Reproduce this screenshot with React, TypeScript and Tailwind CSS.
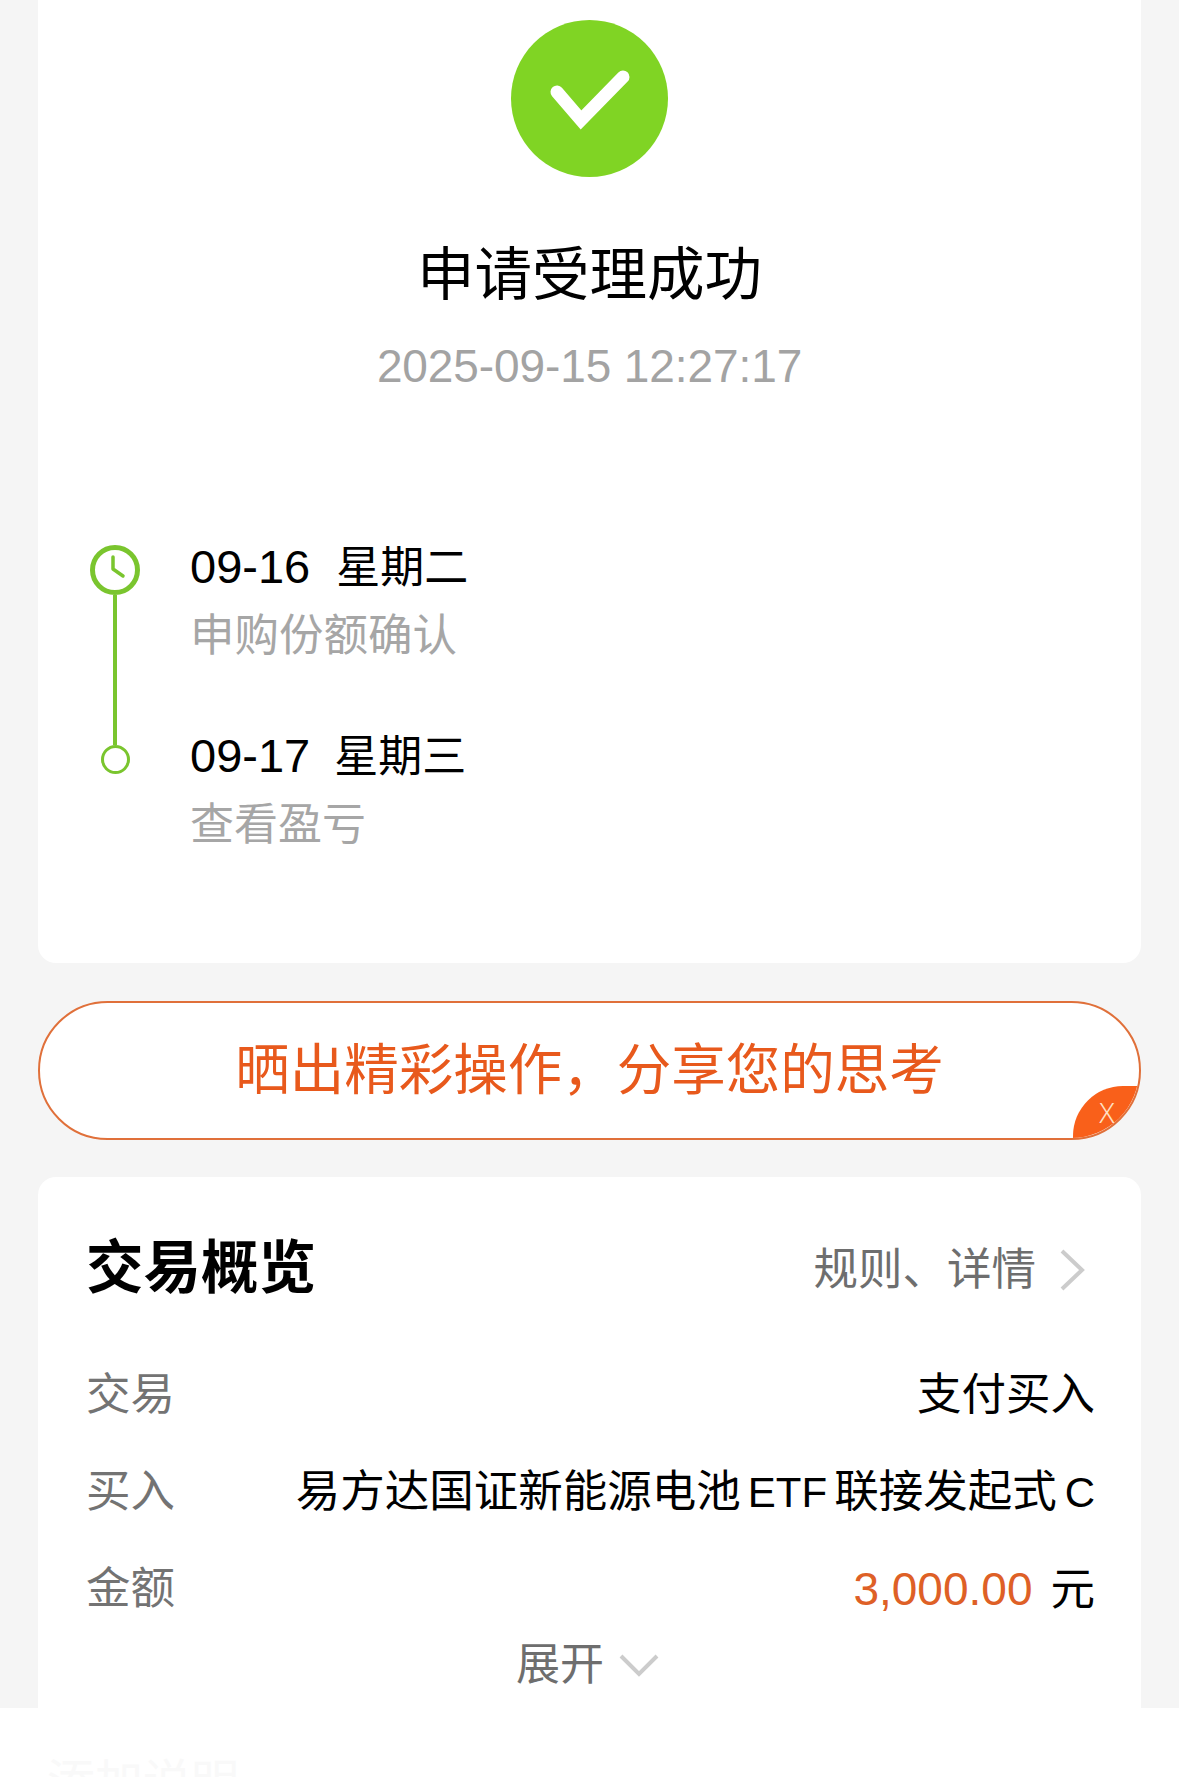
export default function App() {
  const rows = [
    { label: "交易", value: <span className="text-black">支付买入</span> },
    {
      label: "买入",
      value: (
        <span className="text-black">
          易方达国证新能源电池
          <span className="mx-[7px] text-[42px]">ETF</span>
          联接发起式
          <span className="ml-[8px] text-[42px]">C</span>
        </span>
      ),
    },
    {
      label: "金额",
      value: (
        <span className="text-black">
          <span className="text-[46px] text-[#de6026]">3,000.00</span>
          <span className="ml-[18px]">元</span>
        </span>
      ),
    },
  ];
  return (
    <div className="h-[1777px] overflow-hidden flex flex-col bg-[#f5f5f5] [font-family:'Liberation_Sans','Noto_Sans_CJK_SC',sans-serif]">
      <main className="flex-1 min-h-0 overflow-hidden px-[38px]">
        <section className="bg-white rounded-b-[18px] pt-[20px] pb-[113px]">
          <div className="flex flex-col items-center">
            <svg viewBox="0 0 157 157" className="w-[157px] h-[157px]">
              <circle cx="78.5" cy="78.5" r="78.5" fill="#80d424" />
              <path d="M46 72 L70 100 L112 57" fill="none" stroke="#fff" strokeWidth="13" strokeLinecap="round" strokeLinejoin="miter" />
            </svg>
            <h1 className="mt-[68px] text-[57.5px] leading-[60px] font-normal text-black">申请受理成功</h1>
            <p className="mt-[36px] text-[46px] leading-[50px] text-[#a3a3a3] tracking-[-0.1px]">2025-09-15 12:27:17</p>
          </div>
          <div className="mt-[151px] pl-[52px] flex gap-[50px]">
            <div className="w-[50px] pt-[3px] pb-[76px] flex flex-col items-center">
              <svg viewBox="0 0 50 50" className="w-[50px] h-[50px] shrink-0">
                <circle cx="25" cy="25" r="22.5" fill="none" stroke="#7ac52e" strokeWidth="5" />
                <path d="M23 12 V24 L33 31" fill="none" stroke="#7ac52e" strokeWidth="3.5" strokeLinecap="round" strokeLinejoin="round" />
              </svg>
              <div className="w-[4px] flex-1 bg-[#7ac52e]" />
              <div className="w-[29px] h-[29px] shrink-0 rounded-full border-[3px] border-[#7ac52e]" />
            </div>
            <div>
              <p className="text-[44px] leading-[50px] text-black">
                <span className="text-[47px]">09-16</span>
                <span className="ml-[26px]">星期二</span>
              </p>
              <p className="mt-[18px] text-[44.5px] leading-[50px] text-[#a6a6a6]">申购份额确认</p>
              <p className="mt-[70px] text-[44px] leading-[50px] text-black">
                <span className="text-[47px]">09-17</span>
                <span className="ml-[24px]">星期三</span>
              </p>
              <p className="mt-[18px] text-[44px] leading-[50px] text-[#a6a6a6]">查看盈亏</p>
            </div>
          </div>
        </section>

        <div className="relative mt-[38px] h-[139px] rounded-[70px] border-2 border-[#e0703a] bg-white overflow-hidden flex items-center justify-center">
          <span className="text-[54.5px] leading-[60px] text-[#e8591c]">晒出精彩操作，分享您的思考</span>
          <div className="absolute right-0 bottom-0 w-[66px] h-[52px] bg-[#f9601a] rounded-tl-[50px] flex items-center justify-center pl-[2px]">
            <span className="text-[28px] leading-none font-light text-[#ffe0c4] [font-family:'Noto_Sans',sans-serif]">X</span>
          </div>
        </div>

        <section className="mt-[37px] h-[600px] bg-white rounded-t-[18px] pt-[61px] pl-[48px] pr-[46px]">
          <div className="flex items-center justify-between">
            <h2 className="text-[57.5px] leading-[60px] font-bold text-black">交易概览</h2>
            <div className="flex items-center pt-[3px] text-[#6e6e6e] text-[44.5px] leading-[50px]">
              <span>规则、详情</span>
              <svg viewBox="0 0 26 44" className="ml-[23px] mr-[10px] w-[26px] h-[44px]">
                <path d="M3 3 L23 22 L3 41" fill="none" stroke="#cccccc" strokeWidth="4" />
              </svg>
            </div>
          </div>
          <div className="mt-[49px]">
            {rows.map((r) => (
              <div key={r.label} className="h-[97px] flex items-center justify-between text-[44.5px]">
                <span className="text-[#737373]">{r.label}</span>
                {r.value}
              </div>
            ))}
          </div>
          <div className="mt-[2px] pr-[6px] flex items-center justify-center text-[44px] leading-[50px] text-[#6e6e6e]">
            <span>展开</span>
            <svg viewBox="0 0 40 24" className="ml-[15px] w-[40px] h-[24px]">
              <path d="M2 3 L20 21 L38 3" fill="none" stroke="#cccccc" strokeWidth="4" />
            </svg>
          </div>
        </section>
      </main>
      <footer className="h-[69px] shrink-0 overflow-hidden bg-white pt-[50px] pl-[47px]">
        <p className="text-[48px] leading-[50px] text-[#f9f9f9]">添加说明</p>
      </footer>
    </div>
  );
}
